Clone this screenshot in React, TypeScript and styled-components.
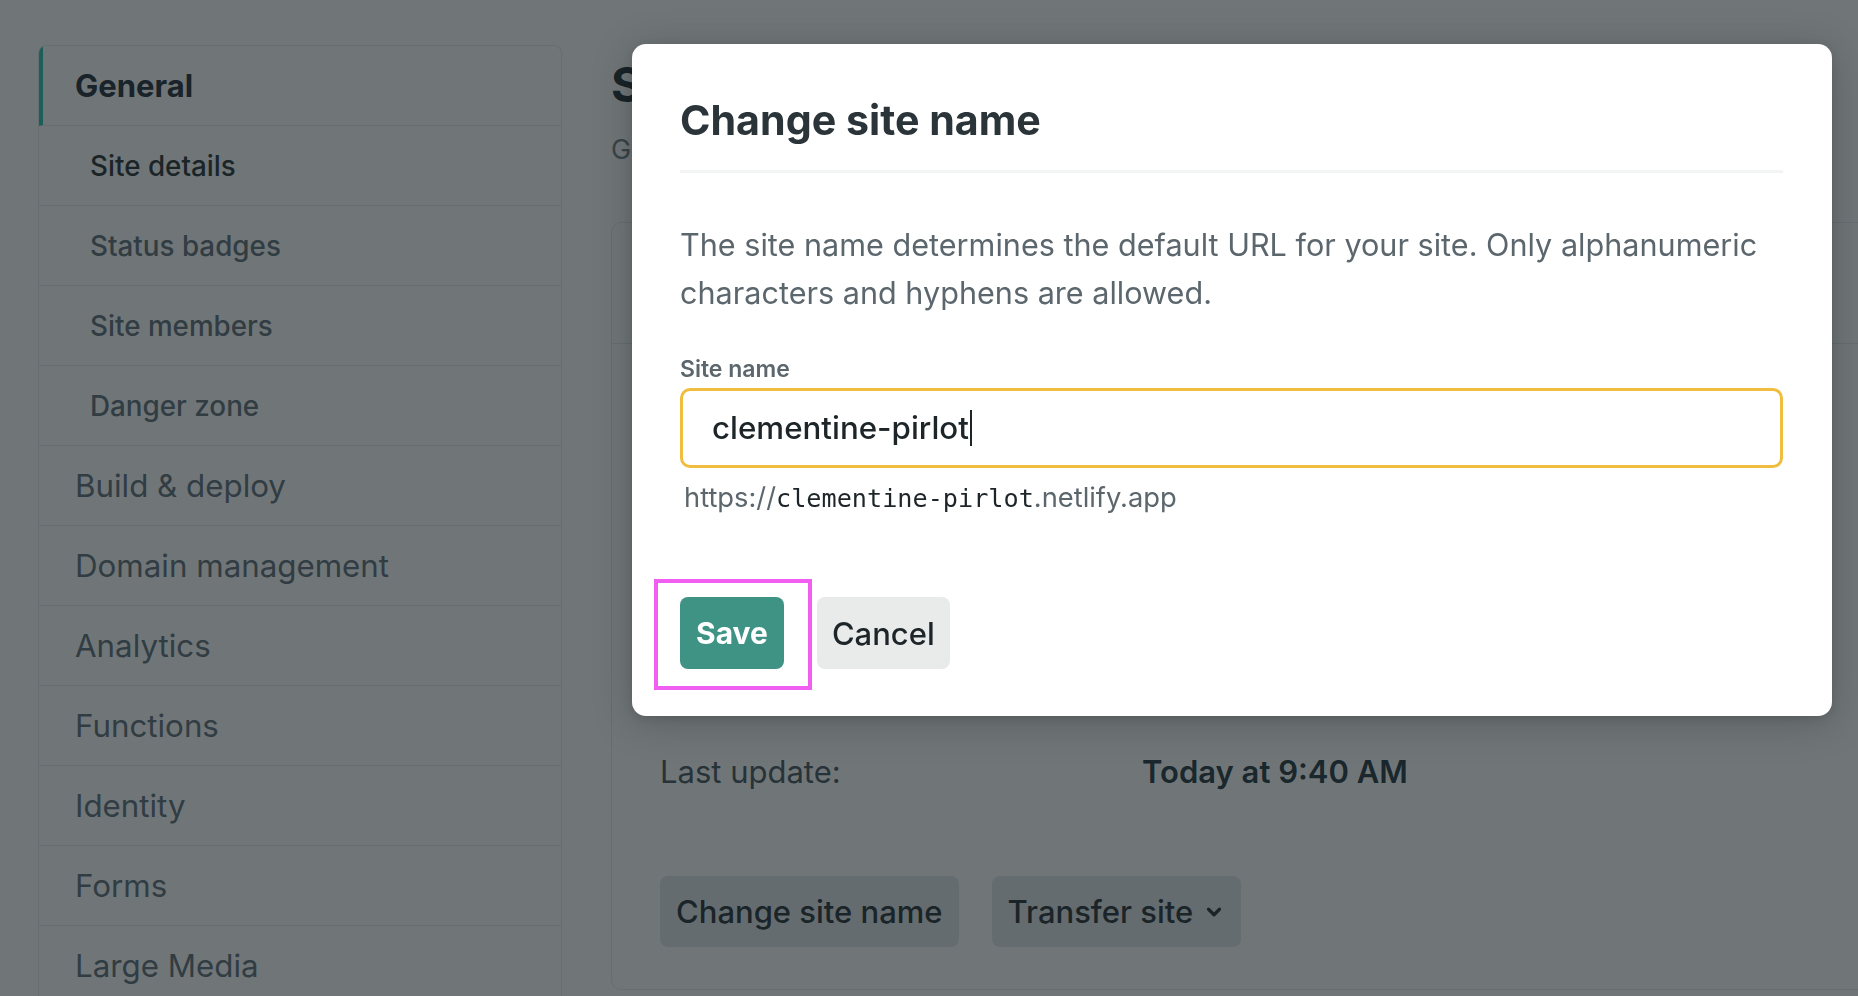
import React from 'react';
import styled, { createGlobalStyle, css } from 'styled-components';
import { ChevronDown } from 'lucide-react';

const GlobalStyle = createGlobalStyle`
  html, body {
    margin: 0;
    padding: 0;
    background: #ffffff;
    font-family: Inter, "Noto Sans", "Liberation Sans", sans-serif;
    overflow: hidden;
  }
  * {
    box-sizing: border-box;
  }
`;

type NavEntry = { label: string; sub?: boolean; active?: boolean; current?: boolean };

const navItems: NavEntry[] = [
  { label: 'General', active: true },
  { label: 'Site details', sub: true, current: true },
  { label: 'Status badges', sub: true },
  { label: 'Site members', sub: true },
  { label: 'Danger zone', sub: true },
  { label: 'Build & deploy' },
  { label: 'Domain management' },
  { label: 'Analytics' },
  { label: 'Functions' },
  { label: 'Identity' },
  { label: 'Forms' },
  { label: 'Large Media' },
];

const App = () => {
  return (
    <>
      <GlobalStyle />
      <Page>
        <Sidebar>
          {navItems.map((item) => (
            <NavItem key={item.label} $sub={item.sub} $active={item.active} $current={item.current}>
              {item.label}
            </NavItem>
          ))}
        </Sidebar>
        <Main>
          <PageTitle>Site details</PageTitle>
          <PageSubtitle>General information</PageSubtitle>
          <Card>
            <CardHeader />
            <CardBody>
              <InfoRow>
                <InfoLabel>Last update:</InfoLabel>
                <InfoValue>Today at 9:40 AM</InfoValue>
              </InfoRow>
              <CardActions>
                <GhostButton>Change site name</GhostButton>
                <GhostButton>
                  Transfer site
                  <ChevronDown size={22} strokeWidth={3.5} />
                </GhostButton>
              </CardActions>
            </CardBody>
          </Card>
        </Main>
      </Page>

      <Overlay>
        <Modal>
          <ModalTitle>Change site name</ModalTitle>
          <ModalText>
            The site name determines the default URL for your site. Only alphanumeric characters and
            hyphens are allowed.
          </ModalText>
          <FieldLabel>Site name</FieldLabel>
          <FieldInput>
            clementine-pirlot
            <Caret />
          </FieldInput>
          <UrlHint>
            https://<Mono>clementine-pirlot</Mono>.netlify.app
          </UrlHint>
          <ModalActions>
            <SaveWrap>
              <SaveButton>Save</SaveButton>
              <Highlight />
            </SaveWrap>
            <CancelButton>Cancel</CancelButton>
          </ModalActions>
        </Modal>
      </Overlay>
    </>
  );
};

export default App;

const Page = styled.div`
  display: flex;
  gap: 49px;
  padding: 45px 0 0 38px;
  height: 100vh;
  overflow: hidden;
`;

const Sidebar = styled.nav`
  display: flex;
  flex-direction: column;
  width: 524px;
  flex-shrink: 0;
  border: 1px solid #e6eaed;
  border-bottom: none;
  border-radius: 8px 8px 0 0;
  overflow: hidden;
`;

const NavItem = styled.div<{ $sub?: boolean; $active?: boolean; $current?: boolean }>`
  display: flex;
  align-items: center;
  height: 80px;
  flex-shrink: 0;
  padding-left: ${({ $sub }) => ($sub ? '51px' : '36px')};
  border-bottom: 1px solid #e6eaed;
  font-size: ${({ $sub }) => ($sub ? '27.8px' : '31.3px')};
  font-weight: ${({ $sub }) => ($sub ? 500 : 400)};
  color: #62707a;

  ${({ $current }) =>
    $current &&
    css`
      color: #2b3539;
    `}

  ${({ $active }) =>
    $active &&
    css`
      padding-left: 32px;
      border-left: 4px solid #2fc4b0;
      font-size: 31px;
      font-weight: 700;
      color: #26303a;
    `}
`;

const Main = styled.main`
  display: flex;
  flex-direction: column;
  flex-shrink: 0;
  width: 1280px;
`;

const PageTitle = styled.h1`
  margin: 11px 0 0;
  font-size: 48px;
  line-height: 58px;
  font-weight: 700;
  color: #26323a;
`;

const PageSubtitle = styled.p`
  margin: 18px 0 0;
  font-size: 27px;
  line-height: 36px;
  color: #75838b;
`;

const Card = styled.section`
  margin-top: 54px;
  border: 1px solid #e6eaed;
  border-radius: 10px;
`;

const CardHeader = styled.div`
  height: 121px;
  border-bottom: 1px solid #e6eaed;
`;

const CardBody = styled.div`
  padding: 391px 48px 42px;
`;

const InfoRow = styled.div`
  display: grid;
  grid-template-columns: 482px 1fr;
  align-items: center;
  height: 72px;
`;

const InfoLabel = styled.span`
  font-size: 31px;
  color: #4a5860;
`;

const InfoValue = styled.span`
  font-size: 31px;
  font-weight: 600;
  color: #283a43;
`;

const CardActions = styled.div`
  display: flex;
  gap: 33px;
  margin-top: 69px;
`;

const GhostButton = styled.button`
  display: inline-flex;
  align-items: center;
  gap: 10px;
  height: 71px;
  padding: 0 16px;
  border: none;
  border-radius: 8px;
  background: #e2e6e9;
  font-family: inherit;
  font-size: 31px;
  font-weight: 500;
  color: #2b3338;
`;

const Overlay = styled.div`
  position: fixed;
  inset: 0;
  display: flex;
  align-items: flex-start;
  padding: 44px 0 0 632px;
  background: rgba(17, 26, 30, 0.6);
`;

const Modal = styled.div`
  width: 1200px;
  padding: 52px 49px 47px 48px;
  background: #ffffff;
  border-radius: 14px;
  box-shadow: 0 6px 40px rgba(0, 0, 0, 0.22), 0 2px 10px rgba(0, 0, 0, 0.12);
`;

const ModalTitle = styled.h2`
  margin: 0;
  padding-bottom: 26px;
  border-bottom: 3px solid #f3f4f4;
  font-size: 41.2px;
  line-height: 48px;
  font-weight: 700;
  color: #2a3439;
`;

const ModalText = styled.p`
  margin: 48px 0 0;
  font-size: 30.6px;
  line-height: 48px;
  color: #5c676d;
`;

const FieldLabel = styled.label`
  display: block;
  margin-top: 38px;
  font-size: 23px;
  line-height: 28px;
  font-weight: 600;
  color: #5c676d;
`;

const FieldInput = styled.div`
  display: flex;
  align-items: center;
  height: 80px;
  margin-top: 5px;
  padding-left: 29px;
  border: 3px solid #f0bd3f;
  border-radius: 10px;
  font-size: 31.3px;
  font-weight: 500;
  color: #1d2529;
`;

const Caret = styled.span`
  display: inline-block;
  width: 2px;
  height: 36px;
  margin-left: 1px;
  background: #1d2529;
`;

const UrlHint = styled.div`
  margin-top: 13px;
  padding-left: 4px;
  font-size: 27.3px;
  line-height: 34px;
  color: #5c676d;
`;

const Mono = styled.span`
  font-family: "DejaVu Sans Mono", "Liberation Mono", monospace;
  font-size: 25.2px;
  color: #1d2529;
`;

const ModalActions = styled.div`
  display: flex;
  gap: 33px;
  margin-top: 81px;
`;

const SaveWrap = styled.div`
  position: relative;
  display: flex;
`;

const SaveButton = styled.button`
  height: 72px;
  padding: 0 16px;
  border: none;
  border-radius: 8px;
  background: #3e9385;
  font-family: inherit;
  font-size: 30px;
  font-weight: 700;
  color: #ffffff;
`;

const Highlight = styled.span`
  position: absolute;
  left: -26px;
  top: -18px;
  right: -28px;
  bottom: -21px;
  border: 4px solid #f25ef2;
  pointer-events: none;
`;

const CancelButton = styled.button`
  height: 72px;
  padding: 0 15px;
  border: none;
  border-radius: 8px;
  background: #e9ebeb;
  font-family: inherit;
  font-size: 31px;
  font-weight: 500;
  color: #1d2529;
`;
